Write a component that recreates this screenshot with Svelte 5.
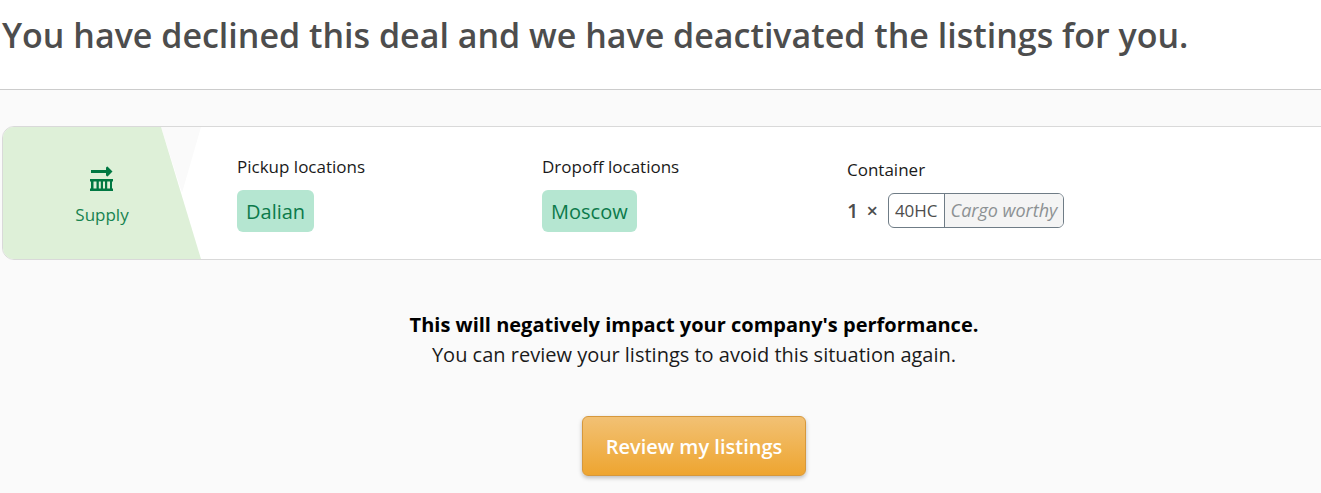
<script>
  const locations = [
    { label: 'Pickup locations', place: 'Dalian' },
    { label: 'Dropoff locations', place: 'Moscow' },
  ];
</script>

<div class="page">
  <header>
    <h1>You have declined this deal and we have deactivated the listings for you.</h1>
  </header>

  <main>
    <section class="card">
      <div class="kind">
        <svg class="shape" viewBox="0 0 198 132" preserveAspectRatio="none" aria-hidden="true">
          <path d="M158 0H198L179 66Z" fill="#fafafa" />
          <path d="M0 0H158L198 132H0Z" fill="#def0d8" />
        </svg>
        <div class="kind-body">
          <svg width="24" height="26" viewBox="0 0 24 26" fill="#007842" aria-hidden="true">
            <path d="M1 4H16V2Q16 .8 17.500 .5L22.500 5.500L17.500 10.500Q16 10.200 16 9V7H1Z" />
            <path fill-rule="evenodd" d="M0 13H23V15.500H22V22.500H23V25H0V22.500H1V15.500H0ZM3.500 15.500V22.500H6.500V15.500ZM8.800 15.500V22.500H10.800V15.500ZM13 15.500V22.500H15V15.500ZM17.200 15.500V22.500H20V15.500Z" />
          </svg>
          <span>Supply</span>
        </div>
      </div>
      {#each locations as item}
        <div class="cell">
          <span class="label">{item.label}</span>
          <span class="place">{item.place}</span>
        </div>
      {/each}
      <div class="cell">
        <span class="label">Container</span>
        <div class="amount">
          <span class="count">1</span>
          <span class="times">×</span>
          <span class="box"><span class="size">40HC</span><em>Cargo worthy</em></span>
        </div>
      </div>
    </section>

    <p><strong>This will negatively impact your company's performance.</strong><br />You can review your listings to avoid this situation again.</p>
    <button type="button">Review my listings</button>
  </main>
</div>

<style>
  :global(body) {
    margin: 0;
    background: #fafafa;
  }
  .page {
    box-sizing: border-box;
    min-height: 100vh;
    overflow: hidden;
    background: #fafafa;
    color: #1a1a1a;
    font-family: "Open Sans", "Noto Sans", sans-serif;
  }
  header {
    padding: 11px 2px 30px;
    background: #fff;
    border-bottom: 1px solid #ccc;
  }
  h1 {
    margin: 0;
    color: #4d4d4d;
    font-size: 34px;
    font-weight: 600;
    line-height: 48px;
    white-space: nowrap;
  }
  main {
    display: flex;
    flex-direction: column;
    align-items: center;
    padding: 36px 0 17px 2px;
    margin-right: -65px;
  }
  .card {
    box-sizing: border-box;
    display: flex;
    align-self: stretch;
    min-height: 134px;
    overflow: hidden;
    background: #fff;
    border: 1px solid #d9d9d9;
    border-radius: 12px;
  }
  .kind {
    display: grid;
    flex: none;
    width: 198px;
    margin-right: 36px;
  }
  .shape,
  .kind-body {
    grid-area: 1 / 1;
  }
  .shape {
    width: 100%;
    height: 100%;
  }
  .kind-body {
    display: flex;
    flex-direction: column;
    align-items: center;
    justify-content: center;
    gap: 11px;
    color: #178350;
    font-size: 17px;
    line-height: 24px;
    padding-top: 6px;
  }
  .cell {
    display: flex;
    flex-direction: column;
    align-items: flex-start;
    justify-content: center;
    gap: 11px;
    width: 305px;
  }
  .label {
    font-size: 17px;
    line-height: 24px;
  }
  .place {
    padding: 7px 9px 5px;
    background: #b5e6d1;
    border-radius: 6px;
    color: #0c7a4b;
    font-size: 20px;
    line-height: 30px;
  }
  .amount {
    display: flex;
    align-items: center;
    color: #4d4d4d;
    font-size: 17px;
  }
  .count {
    font-size: 20px;
    font-weight: 600;
  }
  .times {
    margin: 0 10px 0 8px;
    font-size: 20px;
    font-weight: 600;
  }
  .box {
    display: flex;
    overflow: hidden;
    border: 1px solid #6f7c86;
    border-radius: 6px;
    background: #fff;
    line-height: 33px;
  }
  .size {
    padding: 0 6px;
    border-right: 1px solid #6f7c86;
  }
  em {
    padding: 0 6px;
    background: #f4f4f4;
    color: #8c9193;
    font-size: 18px;
  }
  p {
    margin: 50px 0 46px;
    font-size: 20px;
    line-height: 30px;
    text-align: center;
  }
  strong {
    color: #000;
  }
  button {
    padding: 15px 23px 13px;
    border: 1px solid #d6983c;
    border-radius: 6px;
    background: linear-gradient(#f2c174, #eea530);
    box-shadow: 0 2px 4px rgba(0, 0, 0, 0.25);
    color: #fff;
    font-family: inherit;
    font-size: 20px;
    font-weight: 600;
    line-height: 30px;
  }
</style>
